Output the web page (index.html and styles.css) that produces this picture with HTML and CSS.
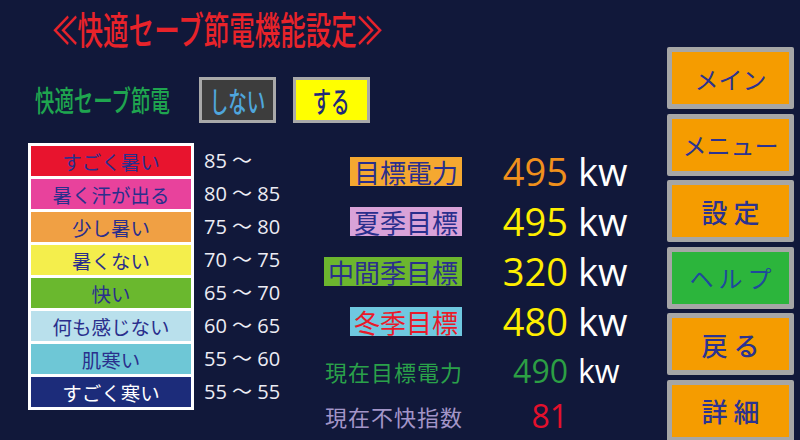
FILE: index.html
```html
<!DOCTYPE html>
<html lang="ja">
<head>
<meta charset="utf-8">
<title>快適セーブ節電機能設定</title>
<link rel="stylesheet" href="styles.css">
</head>
<body>
<div class="screen">
  <div class="main">
    <h1 class="title"><span class="title-text">≪快適セーブ節電機能設定≫</span></h1>
    <div class="mode">
      <div class="mode-label"><span class="mode-text">快適セーブ節電</span></div>
      <div class="toggle off"><span class="toggle-text">しない</span></div>
      <div class="toggle on"><span class="toggle-text">する</span></div>
    </div>
    <div class="content">
      <div class="scale">
        <div class="level l1">すごく暑い</div>
        <div class="level l2">暑く汗が出る</div>
        <div class="level l3">少し暑い</div>
        <div class="level l4">暑くない</div>
        <div class="level l5">快い</div>
        <div class="level l6">何も感じない</div>
        <div class="level l7">肌寒い</div>
        <div class="level l8">すごく寒い</div>
      </div>
      <div class="ranges">
        <div class="range">85 ～</div>
        <div class="range">80 ～ 85</div>
        <div class="range">75 ～ 80</div>
        <div class="range">70 ～ 75</div>
        <div class="range">65 ～ 70</div>
        <div class="range">60 ～ 65</div>
        <div class="range">55 ～ 60</div>
        <div class="range">55 ～ 55</div>
      </div>
      <div class="targets">
        <div class="t-label"><span class="tag tag-target">目標電力</span></div>
        <div class="t-num orange">495</div>
        <div class="t-unit">kw</div>

        <div class="t-label"><span class="tag tag-summer">夏季目標</span></div>
        <div class="t-num yellow">495</div>
        <div class="t-unit">kw</div>

        <div class="t-label"><span class="tag tag-mid">中間季目標</span></div>
        <div class="t-num yellow">320</div>
        <div class="t-unit">kw</div>

        <div class="t-label"><span class="tag tag-winter">冬季目標</span></div>
        <div class="t-num yellow">480</div>
        <div class="t-unit">kw</div>

        <div class="t-label"><span class="plain green-text">現在目標電力</span></div>
        <div class="t-num small green">490</div>
        <div class="t-unit small">kw</div>

        <div class="t-label last"><span class="plain lavender-text">現在不快指数</span></div>
        <div class="t-num small red last">81</div>
        <div class="t-unit small last"></div>
      </div>
    </div>
  </div>
  <nav class="nav">
    <div class="nav-btn">メイン</div>
    <div class="nav-btn">メニュー</div>
    <div class="nav-btn wide">設 定</div>
    <div class="nav-btn help">ヘルプ</div>
    <div class="nav-btn wide">戻 る</div>
    <div class="nav-btn wide">詳 細</div>
  </nav>
</div>
</body>
</html>
```
FILE: styles.css
```css
html, body {
  margin: 0;
  padding: 0;
}
body {
  width: 800px;
  height: 440px;
  overflow: hidden;
  background: #11183a;
  font-family: "Noto Sans CJK JP", "Noto Sans", sans-serif;
}
.screen {
  display: flex;
  width: 800px;
  height: 440px;
}
.main {
  flex: 1;
  display: flex;
  flex-direction: column;
}
.title {
  margin: 0;
  height: 56px;
  padding-left: 52px;
  padding-bottom: 4px;
  display: flex;
  align-items: center;
  font-weight: normal;
}
.title-text {
  display: inline-block;
  font-size: 38px;
  line-height: 40px;
  color: #e8232a;
  font-weight: 500;
  white-space: nowrap;
  transform: scaleX(0.672);
  transform-origin: left center;
}
.mode {
  display: flex;
  align-items: center;
  margin-top: 17px;
  height: 46px;
}
.mode-label {
  width: 164px;
  padding-left: 35px;
}
.mode-text {
  display: inline-block;
  font-size: 29px;
  line-height: 32px;
  color: #1fa54f;
  font-weight: 500;
  white-space: nowrap;
  transform: scaleX(0.67);
  transform-origin: left center;
}
.toggle {
  box-sizing: border-box;
  width: 77px;
  height: 46px;
  border: 3px solid #a9a9a9;
  display: flex;
  align-items: center;
  justify-content: center;
}
.toggle.off {
  background: #3d3d3d;
  color: #4fa6dc;
}
.toggle.on {
  margin-left: 17px;
  background: #ffff00;
  color: #1f2a7a;
}
.toggle-text {
  display: inline-block;
  font-size: 29px;
  line-height: 30px;
  font-weight: 500;
  transform: scaleX(0.64);
  white-space: nowrap;
}
.content {
  display: flex;
  align-items: flex-start;
  margin-top: 20px;
}
.scale {
  margin-left: 28px;
  width: 166px;
  box-sizing: border-box;
  background: #ffffff;
  padding: 3px;
  display: grid;
  grid-auto-rows: 30px;
  row-gap: 3px;
}
.level {
  display: flex;
  align-items: center;
  justify-content: center;
  font-size: 19.5px;
  color: #2a2f8c;
  white-space: nowrap;
}
.l1 { background: #e8142e; }
.l2 { background: #e8429c; }
.l3 { background: #f0a044; }
.l4 { background: #f4ee4c; }
.l5 { background: #6ab82e; }
.l6 { background: #b9e0ec; }
.l7 { background: #6ec7d6; }
.l8 { background: #1c2c7a; color: #ffffff; }
.ranges {
  width: 80px;
  margin-left: 10px;
  padding-top: 3px;
  display: grid;
  grid-auto-rows: 30px;
  row-gap: 3px;
}
.range {
  font-family: "Open Sans", "Noto Sans CJK JP", sans-serif;
  font-size: 20px;
  line-height: 30px;
  color: #ececf4;
  white-space: nowrap;
}
.targets {
  margin-left: 18px;
  margin-top: 3px;
  display: grid;
  grid-template-columns: 160px 106px auto;
  grid-template-rows: 50px 50px 50px 50px 50px 40px;
}
.t-label {
  display: flex;
  align-items: center;
  justify-content: flex-end;
}
.tag {
  height: 29px;
  line-height: 29px;
  padding: 0 4px;
  font-size: 26px;
  color: #2a2f8c;
  white-space: nowrap;
}
.tag-target { background: #f5a830; }
.tag-summer { background: #d9a2d8; }
.tag-mid { background: #6cb62e; }
.tag-winter { background: #6fc8e0; color: #e81a2a; }
.plain {
  font-size: 22px;
  letter-spacing: 1px;
  margin-right: -1px;
  white-space: nowrap;
}
.green-text { color: #2aa14a; }
.lavender-text { color: #a395c8; }
.t-num {
  font-family: "Open Sans", sans-serif;
  font-size: 38px;
  font-weight: 500;
  line-height: 50px;
  text-align: right;
}
.t-unit {
  font-family: "Open Sans", sans-serif;
  font-size: 38px;
  font-weight: 500;
  line-height: 50px;
  color: #ffffff;
  padding-left: 10px;
}
.t-num.small, .t-unit.small {
  font-size: 32px;
}
.last { line-height: 40px; }
.orange { color: #f0901c; }
.yellow { color: #ffee00; }
.green { color: #2c9f44; }
.red { color: #e4102c; }
.nav {
  width: 127px;
  margin-right: 6px;
  padding-top: 47px;
  display: flex;
  flex-direction: column;
  gap: 4.5px;
}
.nav-btn {
  flex: none;
  box-sizing: border-box;
  height: 62px;
  border: 5px solid #a6a6a6;
  border-radius: 2px;
  background: #f59c00;
  color: #2b3390;
  display: flex;
  align-items: center;
  justify-content: center;
  font-size: 24px;
  white-space: nowrap;
}
.nav-btn.wide {
  font-size: 26px;
  font-weight: 500;
}
.nav-btn.help {
  background: #2cb53c;
  color: #1e4a9c;
  letter-spacing: 5px;
  padding-left: 5px;
}
```
